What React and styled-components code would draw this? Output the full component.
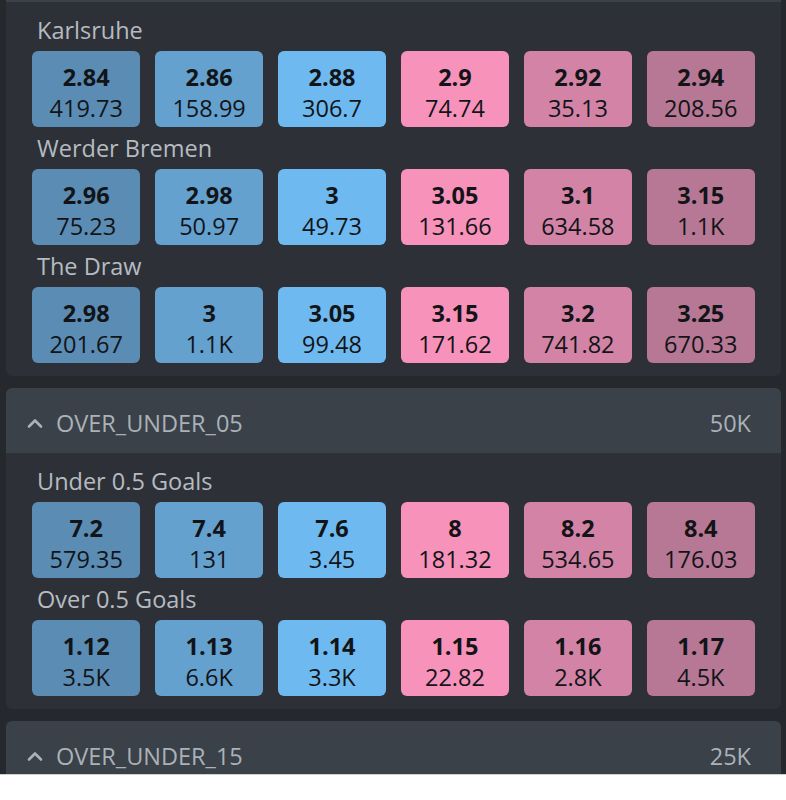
import React from "react";
import styled, { createGlobalStyle } from "styled-components";

const Global = createGlobalStyle`
  html, body { margin: 0; padding: 0; background: #ffffff; }
  body { font-family: "Open Sans", "Noto Sans", sans-serif; }
`;

const Viewport = styled.div`
  height: 774px;
  overflow: hidden;
  background: #25292e;
  border-bottom: 1px solid #d0d0d0;
`;

const List = styled.div`
  display: flex;
  flex-direction: column;
  gap: 12px;
  padding: 0 5px 0 6px;
  margin-top: -63px;
`;

const Card = styled.section`
  background: #2d3137;
  border-radius: 6px;
  overflow: hidden;
`;

const Header = styled.header`
  height: 65px;
  box-sizing: border-box;
  padding: 5px 30px 0 20px;
  background: #3b4148;
  display: flex;
  align-items: center;
  color: #aab1b8;
  font-size: 23.5px;
`;

const Caret = styled.svg`
  width: 18px;
  height: 18px;
  margin-right: 12px;
  flex: none;
`;

const Title = styled.span`
  flex: 1;
`;

const Volume = styled.span``;

const Body = styled.div`
  padding: 14px 26px 13px;
  display: flex;
  flex-direction: column;
  gap: 7px;
`;

const Label = styled.div`
  height: 28px;
  line-height: 28px;
  padding-left: 5px;
  color: #b6bbc1;
  font-size: 23.5px;
`;

const Ladder = styled.div`
  display: grid;
  grid-template-columns: repeat(6, 1fr);
  column-gap: 14.5px;
`;

const shades = ["#5b8cb4", "#64a1cf", "#6ebaf0", "#f792bb", "#d384a6", "#b67895"];

const Price = styled.div`
  height: 76px;
  box-sizing: border-box;
  padding-top: 8px;
  border-radius: 6px;
  background: ${(p) => shades[p.$col]};
  display: flex;
  flex-direction: column;
  align-items: center;
  justify-content: center;
  color: #121417;
  font-size: 23.5px;
  line-height: 31px;
`;

const Odds = styled.span`
  font-weight: 700;
`;

const Size = styled.span`
  font-weight: 400;
`;

const markets = [
  {
    title: "MATCH_ODDS",
    volume: "100K",
    runners: [
      { name: "Karlsruhe", odds: ["2.84", "2.86", "2.88", "2.9", "2.92", "2.94"], sizes: ["419.73", "158.99", "306.7", "74.74", "35.13", "208.56"] },
      { name: "Werder Bremen", odds: ["2.96", "2.98", "3", "3.05", "3.1", "3.15"], sizes: ["75.23", "50.97", "49.73", "131.66", "634.58", "1.1K"] },
      { name: "The Draw", odds: ["2.98", "3", "3.05", "3.15", "3.2", "3.25"], sizes: ["201.67", "1.1K", "99.48", "171.62", "741.82", "670.33"] },
    ],
  },
  {
    title: "OVER_UNDER_05",
    volume: "50K",
    runners: [
      { name: "Under 0.5 Goals", odds: ["7.2", "7.4", "7.6", "8", "8.2", "8.4"], sizes: ["579.35", "131", "3.45", "181.32", "534.65", "176.03"] },
      { name: "Over 0.5 Goals", odds: ["1.12", "1.13", "1.14", "1.15", "1.16", "1.17"], sizes: ["3.5K", "6.6K", "3.3K", "22.82", "2.8K", "4.5K"] },
    ],
  },
  {
    title: "OVER_UNDER_15",
    volume: "25K",
    runners: [
      { name: "Under 1.5 Goals", odds: ["3.1", "3.15", "3.2", "3.25", "3.3", "3.35"], sizes: ["120.5", "88.1", "40.2", "60.9", "210.4", "95.2"] },
    ],
  },
];

function ChevronUp() {
  return (
    <Caret viewBox="0 0 18 18" fill="none" stroke="#aab1b8" strokeWidth="2.6" strokeLinecap="round" strokeLinejoin="round">
      <polyline points="3,12.5 9,6.5 15,12.5" />
    </Caret>
  );
}

export default function App() {
  return (
    <>
      <Global />
      <Viewport>
        <List>
          {markets.map((m) => (
            <Card key={m.title}>
              <Header>
                <ChevronUp />
                <Title>{m.title}</Title>
                <Volume>{m.volume}</Volume>
              </Header>
              <Body>
                {m.runners.map((r) => (
                  <React.Fragment key={r.name}>
                    <Label>{r.name}</Label>
                    <Ladder>
                      {r.odds.map((o, i) => (
                        <Price key={i} $col={i}>
                          <Odds>{o}</Odds>
                          <Size>{r.sizes[i]}</Size>
                        </Price>
                      ))}
                    </Ladder>
                  </React.Fragment>
                ))}
              </Body>
            </Card>
          ))}
        </List>
      </Viewport>
    </>
  );
}
